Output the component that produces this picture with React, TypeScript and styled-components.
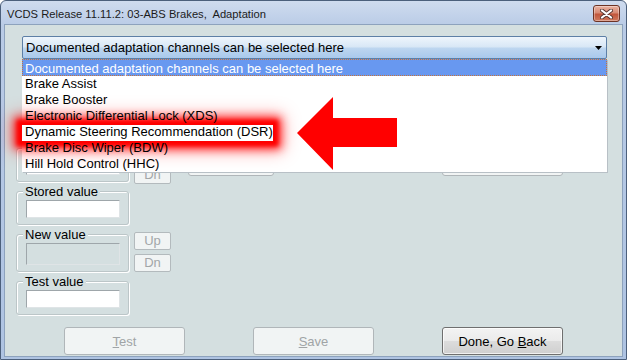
import React from "react";
import styled, { createGlobalStyle, css } from "styled-components";

const GlobalStyle = createGlobalStyle`
  html, body {
    margin: 0;
    padding: 0;
    background: #ffffff;
  }
  body {
    font-family: "Liberation Sans", Arial, sans-serif;
  }
`;

const Window = styled.div`
  width: 627px;
  height: 360px;
  box-sizing: border-box;
  display: flex;
  flex-direction: column;
  background: linear-gradient(180deg, #cfdcef 0px, #b9cbe6 25px, #aec3e2 100%);
  border: 1px solid #4c607c;
  border-radius: 6px 6px 0 0;
  overflow: hidden;
`;

const TitleBar = styled.div`
  height: 24px;
  flex: none;
  display: flex;
  align-items: flex-start;
  justify-content: space-between;
  padding: 0 6px 0 6px;
`;

const Title = styled.span`
  font-size: 11.2px;
  color: #1b1b1b;
  white-space: pre;
  margin-top: 7px;
`;

const CloseButton = styled.div`
  width: 27px;
  height: 17px;
  box-sizing: border-box;
  border: 1px solid #6c3324;
  border-radius: 3px;
  background: linear-gradient(180deg, #e9b2a2 0%, #d88a73 45%, #c2563b 55%, #cf7a5e 100%);
  box-shadow: inset 0 0 0 1px rgba(255, 255, 255, 0.35);
  display: flex;
  align-items: center;
  justify-content: center;
  margin-top: 4px;
`;

const Client = styled.div`
  position: relative;
  flex: 1;
  margin: 0 4px 3px 4px;
  background: #d4dfe0;
  box-shadow: 0 0 0 1px #8da2bd;
  display: flex;
  flex-direction: column;
`;

const Combo = styled.div`
  margin: 11px 15px 0 17px;
  height: 23px;
  box-sizing: border-box;
  border: 1px solid #5d7fa6;
  border-radius: 2px;
  background: linear-gradient(180deg, #eef5fc 0%, #d9e8f6 45%, #bcd5ef 55%, #a9c9ec 100%);
  display: flex;
  align-items: center;
  justify-content: space-between;
  padding: 0 4px 0 3px;
  font-size: 13px;
  color: #000;
`;

const DropList = styled.ul`
  position: absolute;
  z-index: 2;
  top: 34px;
  left: 17px;
  width: 585px;
  margin: 0;
  padding: 0;
  list-style: none;
  background: #ffffff;
  box-shadow: 1px 1px 0 #b8c0c6;
`;

const ListItem = styled.li<{ $selected?: boolean; $marked?: boolean }>`
  position: relative;
  height: 16px;
  line-height: 16px;
  padding-left: 3px;
  font-size: 13px;
  color: #000;
  white-space: nowrap;

  ${(p) =>
    p.$selected &&
    css`
      height: 17px;
      line-height: 17px;
      box-sizing: border-box;
      padding-left: 2px;
      background: #6898f0;
      color: #ffffff;
      border: 1px dotted #c8743a;
    `}

  ${(p) =>
    p.$marked &&
    css`
      &::before {
        content: "";
        position: absolute;
        z-index: -1;
        left: 0;
        top: 1px;
        width: 251px;
        height: 16px;
        background: #ffffff;
        box-shadow: 0 0 0 2px #ff0000, 0 0 4px 5px #ff0000,
          0 0 10px 8px rgba(255, 0, 0, 0.8), 0 0 18px 10px rgba(255, 0, 0, 0.35);
      }
    `}
`;

const Pointer = styled.svg`
  position: absolute;
  z-index: 3;
  left: 292px;
  top: 72px;
`;

const Form = styled.div`
  display: flex;
  flex-direction: column;
  padding-left: 11px;
`;

const TopRow = styled.div`
  margin-top: 82px;
  display: flex;
  align-items: flex-start;
`;

const ValueRow = styled.div<{ $gap?: number }>`
  display: flex;
  align-items: flex-start;
  margin-top: ${(p) => p.$gap ?? 0}px;
`;

const GroupBox = styled.div`
  width: 113px;
  box-sizing: border-box;
  margin-top: 7px;
  padding: 0 0 6px 0;
  border: 1px solid #bcc6c8;
  border-radius: 3px;
  box-shadow: inset 1px 1px 0 #ffffff, 1px 1px 0 #ffffff;
`;

const Caption = styled.div`
  width: fit-content;
  min-height: 15px;
  margin: -8px 0 0 6px;
  padding: 0 2px;
  background: #d4dfe0;
  font-size: 13px;
  line-height: 15px;
  color: #000;
`;

const ValueField = styled.div<{ $disabled?: boolean; $height?: number }>`
  width: 94px;
  height: ${(p) => p.$height ?? 18}px;
  margin: 1px 0 0 9px;
  box-sizing: border-box;
  border: 1px solid #9ea6aa;
  border-right-color: #dfe4e6;
  border-bottom-color: #dfe4e6;
  background: ${(p) => (p.$disabled ? "#d4dfe0" : "#ffffff")};
`;

const SpinColumn = styled.div<{ $top: number }>`
  display: flex;
  flex-direction: column;
  gap: 4px;
  margin: ${(p) => p.$top}px 0 0 5px;
`;

const SpinButton = styled.div`
  width: 37px;
  height: 18px;
  box-sizing: border-box;
  border: 1px solid #b3babd;
  border-radius: 2px;
  background: #f1f4f4;
  color: #a2a6a8;
  font-size: 13px;
  line-height: 16px;
  text-align: center;
`;

const ActionButton = styled.div<{ $disabled?: boolean; $width?: number }>`
  width: ${(p) => p.$width ?? 121}px;
  height: 28px;
  box-sizing: border-box;
  border-radius: 3px;
  display: flex;
  align-items: center;
  justify-content: center;
  font-size: 13px;
  ${(p) =>
    p.$disabled
      ? css`
          border: 1px solid #b0b6b9;
          background: #f1f4f4;
          color: #a0a4a6;
        `
      : css`
          border: 1px solid #6f6f6f;
          background: linear-gradient(180deg, #f3f3f3 0%, #ebebeb 48%, #dcdcdc 52%, #cfcfcf 100%);
          box-shadow: inset 0 0 0 1px rgba(255, 255, 255, 0.7);
          color: #000;
        `}
`;

const TopButtons = styled.div`
  display: flex;
  margin: 7px 0 0 17px;
  gap: 168px;
`;

const ButtonBar = styled.div`
  display: flex;
  gap: 68px;
  margin: 12px 0 0 48px;
`;

const items = [
  "Documented adaptation channels can be selected here",
  "Brake Assist",
  "Brake Booster",
  "Electronic Differential Lock (XDS)",
  "Dynamic Steering Recommendation (DSR)",
  "Brake Disc Wiper (BDW)",
  "Hill Hold Control (HHC)",
];

export default function App() {
  return (
    <>
      <GlobalStyle />
      <Window>
        <TitleBar>
          <Title>VCDS Release 11.11.2: 03-ABS Brakes,  Adaptation</Title>
          <CloseButton>
            <svg width="13" height="10" viewBox="0 0 13 10">
              <path d="M2 1.5 L11 8.5 M11 1.5 L2 8.5" stroke="#5a3a34" strokeWidth="4" strokeLinecap="round" />
              <path d="M2 1.5 L11 8.5 M11 1.5 L2 8.5" stroke="#ffffff" strokeWidth="2.2" strokeLinecap="round" />
            </svg>
          </CloseButton>
        </TitleBar>
        <Client>
          <Combo>
            <span>{items[0]}</span>
            <svg width="7" height="4" viewBox="0 0 7 4">
              <path d="M0 0 H7 L3.5 4 Z" fill="#000" />
            </svg>
          </Combo>

          <DropList>
            {items.map((item, i) => (
              <ListItem key={item} $selected={i === 0} $marked={i === 4}>
                {item}
              </ListItem>
            ))}
          </DropList>

          <Pointer width="100" height="74" viewBox="0 0 100 74">
            <polygon points="0,36 36,0 36,21 100,21 100,50 36,50 36,73" fill="#ff0000" />
          </Pointer>

          <Form>
            {/* this row sits mostly under the open drop list */}
            <TopRow>
              <GroupBox>
                <Caption />
                <ValueField />
              </GroupBox>
              <SpinColumn $top={3}>
                <SpinButton />
                <SpinButton>Dn</SpinButton>
              </SpinColumn>
              <TopButtons>
                <ActionButton $disabled $width={86} />
                <ActionButton $disabled />
              </TopButtons>
            </TopRow>

            <ValueRow>
              <GroupBox>
                <Caption>Stored value</Caption>
                <ValueField />
              </GroupBox>
            </ValueRow>

            <ValueRow $gap={2}>
              <GroupBox>
                <Caption>New value</Caption>
                <ValueField $disabled $height={22} />
              </GroupBox>
              <SpinColumn $top={5}>
                <SpinButton>Up</SpinButton>
                <SpinButton>Dn</SpinButton>
              </SpinColumn>
            </ValueRow>

            <ValueRow $gap={2}>
              <GroupBox>
                <Caption>Test value</Caption>
                <ValueField />
              </GroupBox>
            </ValueRow>

            <ButtonBar>
              <ActionButton $disabled>
                <span>
                  <u>T</u>est
                </span>
              </ActionButton>
              <ActionButton $disabled>
                <span>
                  <u>S</u>ave
                </span>
              </ActionButton>
              <ActionButton>
                <span>
                  Done, Go <u>B</u>ack
                </span>
              </ActionButton>
            </ButtonBar>
          </Form>
        </Client>
      </Window>
    </>
  );
}
